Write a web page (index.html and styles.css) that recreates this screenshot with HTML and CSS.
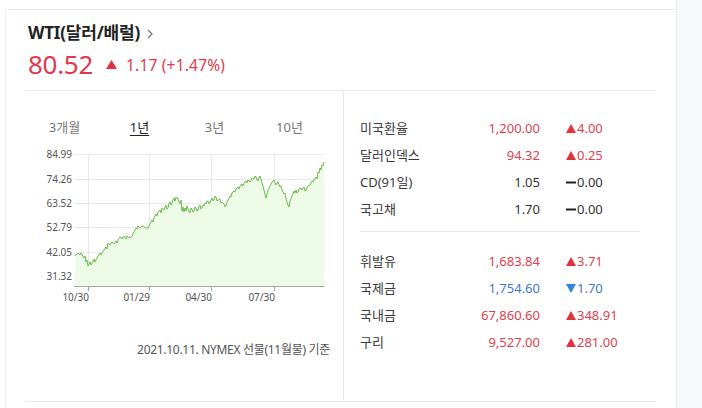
FILE: index.html
```html
<!DOCTYPE html>
<html lang="ko">
<head>
<meta charset="utf-8">
<link rel="stylesheet" href="styles.css">
</head>
<body>
<div class="main">
  <div class="card">
    <div class="topline"></div>
    <div class="content">
      <div class="head">
        <div class="title">WTI(달러/배럴)<svg class="chev" width="6" height="10" viewBox="0 0 6 10"><path d="M1 1 L5 5 L1 9" fill="none" stroke="#777" stroke-width="1.3"/></svg></div>
        <div class="price">
          <span class="pnum">80.52</span>
          <svg class="ptri" width="11" height="9" viewBox="0 0 11 9"><path d="M5.5 0 L11 9 L0 9 Z" fill="#e2323f"/></svg>
          <span class="pchg">1.17 (+1.47%)</span>
        </div>
      </div>
      <div class="panel">
        <div class="left">
          <div class="tabs">
            <span class="tab">3개월</span>
            <span class="tab active">1년</span>
            <span class="tab">3년</span>
            <span class="tab">10년</span>
          </div>
          <svg class="chart" width="290" height="160" viewBox="40 145 290 160">
            <g stroke="#e9e9e9" stroke-width="1">
              <line x1="74" y1="154.5" x2="324" y2="154.5"/>
              <line x1="74" y1="179.5" x2="324" y2="179.5"/>
              <line x1="74" y1="203.5" x2="324" y2="203.5"/>
              <line x1="74" y1="227.5" x2="324" y2="227.5"/>
              <line x1="74" y1="252.5" x2="324" y2="252.5"/>
              <line x1="74" y1="276.5" x2="324" y2="276.5"/>
              <line x1="88.5" y1="154" x2="88.5" y2="286"/>
              <line x1="149.5" y1="154" x2="149.5" y2="286"/>
              <line x1="211.5" y1="154" x2="211.5" y2="286"/>
              <line x1="274.5" y1="154" x2="274.5" y2="286"/>
            </g>
            <path fill="#eefbe6" d="M75,256 L78,253 L80,255 L81,253 L84,258 L85,256 L86,262 L87,260 L88,266 L90,262 L91,265 L92,263 L94,259 L95,262 L96,260 L98,256 L100,253 L101,255 L102,253 L104,250 L106,247 L107,249 L108,243 L110,245 L111,243 L112,242 L114,244 L116,241 L117,243 L118,240 L120,237 L122,239 L123,237 L124,236 L126,239 L127,236 L128,237 L130,238 L132,236 L134,232 L136,228 L137,229 L138,226 L140,228 L142,226 L144,227 L146,228 L148,228 L150,224 L152,220 L153,222 L154,218 L156,214 L157,216 L158,212 L160,210 L161,213 L162,208 L164,210 L165,207 L166,205 L167,209 L168,208 L169,203 L170,202 L171,205 L172,203 L173,200 L174,198 L175,201 L176,197 L178,199 L179,202 L180,204 L181,200 L182,211 L183,207 L184,212 L185,208 L186,211 L187,206 L188,209 L189,212 L190,213 L191,208 L192,209 L193,212 L194,211 L195,207 L196,208 L197,211 L198,210 L199,206 L200,205 L201,209 L202,208 L203,205 L204,206 L205,203 L206,204 L207,201 L208,201 L209,204 L210,203 L211,200 L212,198 L213,201 L214,200 L215,196 L216,197 L217,201 L218,200 L220,199 L221,203 L222,202 L224,204 L225,207 L226,206 L227,202 L228,200 L230,196 L231,197 L232,193 L234,191 L235,192 L236,189 L238,187 L239,189 L240,186 L242,184 L243,186 L244,183 L246,181 L247,183 L248,180 L250,182 L251,180 L252,178 L254,179 L255,176 L256,177 L257,180 L258,181 L259,178 L260,176 L261,179 L262,183 L264,190 L265,194 L266,198 L267,194 L268,190 L270,186 L271,184 L272,182 L274,180 L275,183 L276,185 L277,183 L278,182 L280,187 L281,186 L282,190 L284,194 L285,193 L286,199 L288,205 L289,207 L290,201 L291,199 L292,196 L294,191 L295,193 L296,190 L297,193 L298,192 L299,189 L300,188 L302,190 L303,188 L304,187 L305,191 L306,190 L307,187 L308,186 L310,185 L311,183 L312,181 L313,182 L314,180 L316,177 L317,179 L318,172 L319,173 L320,168 L321,170 L322,165 L323,166 L324,162 L324,286 L75,286 Z"/>
            <path fill="none" stroke="#67bd4b" stroke-width="1" stroke-linejoin="round" d="M75,256 L78,253 L80,255 L81,253 L84,258 L85,256 L86,262 L87,260 L88,266 L90,262 L91,265 L92,263 L94,259 L95,262 L96,260 L98,256 L100,253 L101,255 L102,253 L104,250 L106,247 L107,249 L108,243 L110,245 L111,243 L112,242 L114,244 L116,241 L117,243 L118,240 L120,237 L122,239 L123,237 L124,236 L126,239 L127,236 L128,237 L130,238 L132,236 L134,232 L136,228 L137,229 L138,226 L140,228 L142,226 L144,227 L146,228 L148,228 L150,224 L152,220 L153,222 L154,218 L156,214 L157,216 L158,212 L160,210 L161,213 L162,208 L164,210 L165,207 L166,205 L167,209 L168,208 L169,203 L170,202 L171,205 L172,203 L173,200 L174,198 L175,201 L176,197 L178,199 L179,202 L180,204 L181,200 L182,211 L183,207 L184,212 L185,208 L186,211 L187,206 L188,209 L189,212 L190,213 L191,208 L192,209 L193,212 L194,211 L195,207 L196,208 L197,211 L198,210 L199,206 L200,205 L201,209 L202,208 L203,205 L204,206 L205,203 L206,204 L207,201 L208,201 L209,204 L210,203 L211,200 L212,198 L213,201 L214,200 L215,196 L216,197 L217,201 L218,200 L220,199 L221,203 L222,202 L224,204 L225,207 L226,206 L227,202 L228,200 L230,196 L231,197 L232,193 L234,191 L235,192 L236,189 L238,187 L239,189 L240,186 L242,184 L243,186 L244,183 L246,181 L247,183 L248,180 L250,182 L251,180 L252,178 L254,179 L255,176 L256,177 L257,180 L258,181 L259,178 L260,176 L261,179 L262,183 L264,190 L265,194 L266,198 L267,194 L268,190 L270,186 L271,184 L272,182 L274,180 L275,183 L276,185 L277,183 L278,182 L280,187 L281,186 L282,190 L284,194 L285,193 L286,199 L288,205 L289,207 L290,201 L291,199 L292,196 L294,191 L295,193 L296,190 L297,193 L298,192 L299,189 L300,188 L302,190 L303,188 L304,187 L305,191 L306,190 L307,187 L308,186 L310,185 L311,183 L312,181 L313,182 L314,180 L316,177 L317,179 L318,172 L319,173 L320,168 L321,170 L322,165 L323,166 L324,162"/>
            <g stroke="#a5a5a5" stroke-width="1">
              <line x1="74" y1="286.5" x2="324" y2="286.5"/>
              <line x1="88.5" y1="286" x2="88.5" y2="291"/>
              <line x1="149.5" y1="286" x2="149.5" y2="291"/>
              <line x1="211.5" y1="286" x2="211.5" y2="291"/>
              <line x1="274.5" y1="286" x2="274.5" y2="291"/>
            </g>
            <g class="ylab" text-anchor="end">
              <text x="72" y="158">84.99</text>
              <text x="72" y="183">74.26</text>
              <text x="72" y="207">63.52</text>
              <text x="72" y="231">52.79</text>
              <text x="72" y="256">42.05</text>
              <text x="72" y="280">31.32</text>
            </g>
            <g class="xlab" text-anchor="end">
              <text x="89" y="301">10/30</text>
              <text x="150" y="301">01/29</text>
              <text x="212" y="301">04/30</text>
              <text x="275" y="301">07/30</text>
            </g>
          </svg>
          <div class="note">2021.10.11. NYMEX 선물(11월물) 기준</div>
        </div>
        <div class="right">
          <div class="group first">
            <div class="row"><span class="lbl">미국환율</span><span class="val up">1,200.00</span><span class="chg up"><svg width="10" height="9" viewBox="0 0 10 9"><path d="M5 0 L10 9 L0 9 Z" fill="#e2323f"/></svg>4.00</span></div>
            <div class="row"><span class="lbl">달러인덱스</span><span class="val up">94.32</span><span class="chg up"><svg width="10" height="9" viewBox="0 0 10 9"><path d="M5 0 L10 9 L0 9 Z" fill="#e2323f"/></svg>0.25</span></div>
            <div class="row"><span class="lbl">CD(91일)</span><span class="val">1.05</span><span class="chg"><svg width="10" height="9" viewBox="0 0 10 9"><rect x="0" y="3.5" width="10" height="2" fill="#222"/></svg>0.00</span></div>
            <div class="row"><span class="lbl">국고채</span><span class="val">1.70</span><span class="chg"><svg width="10" height="9" viewBox="0 0 10 9"><rect x="0" y="3.5" width="10" height="2" fill="#222"/></svg>0.00</span></div>
          </div>
          <div class="group">
            <div class="row"><span class="lbl">휘발유</span><span class="val up">1,683.84</span><span class="chg up"><svg width="10" height="9" viewBox="0 0 10 9"><path d="M5 0 L10 9 L0 9 Z" fill="#e2323f"/></svg>3.71</span></div>
            <div class="row"><span class="lbl">국제금</span><span class="val down">1,754.60</span><span class="chg down"><svg width="10" height="9" viewBox="0 0 10 9"><path d="M0 0 L10 0 L5 9 Z" fill="#2d86dc"/></svg>1.70</span></div>
            <div class="row"><span class="lbl">국내금</span><span class="val up">67,860.60</span><span class="chg up"><svg width="10" height="9" viewBox="0 0 10 9"><path d="M5 0 L10 9 L0 9 Z" fill="#e2323f"/></svg>348.91</span></div>
            <div class="row"><span class="lbl">구리</span><span class="val up">9,527.00</span><span class="chg up"><svg width="10" height="9" viewBox="0 0 10 9"><path d="M5 0 L10 9 L0 9 Z" fill="#e2323f"/></svg>281.00</span></div>
          </div>
        </div>
      </div>
    </div>
  </div>
</div>
<div class="side"></div>
</body>
</html>
```

FILE: styles.css
```css
* { box-sizing: border-box; }
html, body { margin: 0; padding: 0; }
body {
  width: 702px;
  height: 408px;
  overflow: hidden;
  display: flex;
  background: #fff;
  font-family: "Noto Sans", "Noto Sans CJK KR", sans-serif;
  color: #333;
}
.main {
  width: 677px;
  height: 408px;
  border-right: 1px solid #e6e7ea;
  flex: none;
}
.side {
  flex: 1;
  background: #f8f9fb;
}
.card {
  margin-left: 5px;
  height: 408px;
  border-left: 1px solid #eeeeee;
}
.topline {
  margin-top: 9px;
  margin-left: 2px;
  height: 1px;
  background: #ebebeb;
}
.content {
  padding-left: 19px;
  width: 650px;
}
.head {
  padding-left: 3px;
  padding-top: 12px;
  height: 80px;
}
.title {
  font-size: 17px;
  font-weight: 700;
  line-height: 22px;
  height: 22px;
  color: #222;
  display: flex;
  align-items: center;
  letter-spacing: -0.2px;
}
.chev { margin-left: 7px; margin-top: 1px; }
.price {
  margin-top: 4px;
  height: 32px;
  display: flex;
  align-items: center;
  color: #e0394a;
}
.pnum {
  font-size: 26px;
  line-height: 32px;
  letter-spacing: -0.3px;
}
.ptri { margin-left: 13px; margin-top: 1px; }
.pchg {
  margin-left: 9px;
  font-size: 15.5px;
  line-height: 32px;
  margin-top: 2px;
  letter-spacing: 0.2px;
}
.panel {
  width: 631px;
  height: 312px;
  border-top: 1px solid #ebebeb;
  border-bottom: 1px solid #ebebeb;
  display: flex;
}
.left {
  width: 319px;
  height: 309px;
  border-right: 1px solid #ebebeb;
  flex: none;
}
.tabs {
  margin-top: 26px;
  margin-left: 2px;
  width: 300px;
  display: grid;
  grid-template-columns: repeat(4, 75px);
  font-size: 13px;
  line-height: 20px;
  height: 20px;
  color: #777;
}
.tab { text-align: center; }
.tab.active {
  color: #222;
  text-decoration: underline;
  text-underline-offset: 3px;
}
.chart {
  display: block;
  margin-top: 8px;
  margin-left: 15px;
}
.chart text {
  font-family: "Noto Sans", sans-serif;
  font-size: 10px;
  fill: #555;
}
.note {
  margin-top: 37px;
  padding-right: 13px;
  text-align: right;
  font-size: 12px;
  line-height: 16px;
  letter-spacing: -0.3px;
  color: #555;
}
.right {
  flex: 1;
  padding: 0 16px;
}
.group { padding-top: 16px; }
.group.first {
  padding-top: 24px;
  padding-bottom: 8px;
  border-bottom: 1px solid #ebebeb;
}
.row {
  display: grid;
  grid-template-columns: 100px 80px auto;
  height: 27px;
  line-height: 27px;
  font-size: 13px;
}
.lbl { color: #3a3a3a; }
.val { text-align: right; color: #333; }
.chg {
  padding-left: 26px;
  display: flex;
  align-items: center;
  gap: 1px;
  color: #333;
}
.up { color: #e0404f; }
.down { color: #3f78cc; }
```
